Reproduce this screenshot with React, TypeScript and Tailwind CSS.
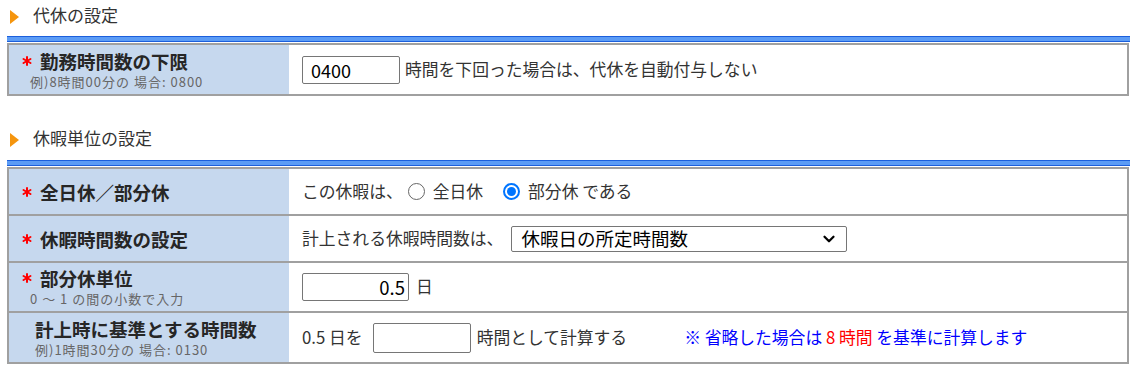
import { ChevronDown } from "lucide-react";

// Section title with the orange marker
function SectionTitle({ title }: { title: string }) {
  return (
    <div className="flex h-[28px] items-center">
      <svg width="9" height="14" viewBox="0 0 9 14" className="ml-[3px] mt-[3px]">
        <polygon points="0,0 9,7 0,14" fill="#f5950e" />
      </svg>
      <span className="ml-[14px] text-[17px] text-[#333]">{title}</span>
    </div>
  );
}

// Blue bar above each table
function BlueBar() {
  return <div className="h-[6px] w-[1123px] border-y-[1.5px] border-[#1c5fdc] bg-[#5c9cf5]" />;
}

// Red required mark
function Star() {
  return (
    <svg width="10" height="10" viewBox="0 0 10 10" className="mr-[8px] shrink-0">
      <g stroke="#ff0000" strokeWidth="2" strokeLinecap="round">
        <line x1="5" y1="1" x2="5" y2="9" />
        <line x1="1.5" y1="3" x2="8.5" y2="7" />
        <line x1="1.5" y1="7" x2="8.5" y2="3" />
      </g>
    </svg>
  );
}

function Radio({ checked }: { checked?: boolean }) {
  return checked ? (
    <span className="flex h-[17px] w-[17px] items-center justify-center rounded-full border-2 border-[#0075ff]">
      <span className="block h-[9px] w-[9px] rounded-full bg-[#0075ff]" />
    </span>
  ) : (
    <span className="block h-[17px] w-[17px] rounded-full border-[1.5px] border-[#666]" />
  );
}

type RowProps = {
  label: string;
  required?: boolean;
  note?: string;
  indent?: boolean;
  h: string;
  children: React.ReactNode;
};

function Row({ label, required, note, indent, h, children }: RowProps) {
  return (
    <div className={`flex border-t-2 border-[#a0a0a0] ${h}`}>
      <div
        className={`flex w-[280px] flex-col justify-center bg-[#c6d8ee] ${indent ? "pl-[26px]" : "pl-[13px]"}`}
      >
        <div className="flex items-center text-[18.5px] font-bold leading-[22px] text-[#262626]">
          {required && <Star />}
          {label}
        </div>
        {note && (
          <div
            className={`mt-[2px] text-[13px] leading-[16px] tracking-[1px] text-[#666] ${indent ? "" : "pl-[8px]"}`}
          >
            {note}
          </div>
        )}
      </div>
      <div className="flex flex-1 items-center pl-[13px] text-[16.8px] text-[#333]">{children}</div>
    </div>
  );
}

export default function App() {
  return (
    <div
      className="w-[1139px] bg-white pl-[7px] pt-[1px]"
      style={{ fontFamily: '"Noto Sans CJK JP", "Noto Sans", sans-serif' }}
    >
      <SectionTitle title="代休の設定" />
      <div className="mt-[7px]">
        <BlueBar />
      </div>
      <div className="mt-[1px] w-[1122px] border-x-2 border-b-2 border-[#a0a0a0]">
        <Row label="勤務時間数の下限" required note="例)8時間00分の 場合: 0800" h="h-[51px]">
          <input
            readOnly
            value="0400"
            className="h-[28px] w-[98px] rounded-[2px] border border-[#767676] px-[8px] text-[18px] text-black outline-none"
          />
          <span className="ml-[5px]">時間を下回った場合は、代休を自動付与しない</span>
        </Row>
      </div>

      <div className="mt-[28px]">
        <SectionTitle title="休暇単位の設定" />
      </div>
      <div className="mt-[8px]">
        <BlueBar />
      </div>
      <div className="mt-[1px] w-[1122px] border-x-2 border-b-2 border-[#a0a0a0]">
        <Row label="全日休／部分休" required h="h-[47px]">
          <span>この休暇は、</span>
          <span className="ml-[5px]">
            <Radio />
          </span>
          <span className="ml-[8px]">全日休</span>
          <span className="ml-[20px]">
            <Radio checked />
          </span>
          <span className="ml-[8px]">部分休 である</span>
        </Row>
        <Row label="休暇時間数の設定" required h="h-[47px]">
          <span>計上される休暇時間数は、</span>
          <div className="relative ml-[8px] flex h-[26px] w-[336px] items-center rounded-[2px] border border-[#767676] pl-[9px] text-[18.5px] text-black">
            休暇日の所定時間数
            <ChevronDown size={18} strokeWidth={3} className="absolute right-[8px] top-[3px] text-black" />
          </div>
        </Row>
        <Row label="部分休単位" required note="0 ～ 1 の間の小数で入力" h="h-[50px]">
          <input
            readOnly
            value="0.5"
            className="h-[28px] w-[107px] rounded-[2px] border border-[#767676] pr-[3px] text-right text-[18.5px] text-black outline-none"
          />
          <span className="ml-[7px]">日</span>
        </Row>
        <Row label="計上時に基準とする時間数" indent note="例)1時間30分の 場合: 0130" h="h-[51px]">
          <span>0.5 日を</span>
          <input
            readOnly
            value=""
            className="ml-[10px] h-[30px] w-[98px] rounded-[2px] border border-[#767676] outline-none"
          />
          <span className="ml-[6px]">時間として計算する</span>
          <span className="ml-[57px] text-[#0000ff]">
            ※ 省略した場合は <span className="text-[#ff0000]">8 時間</span> を基準に計算します
          </span>
        </Row>
      </div>
    </div>
  );
}
